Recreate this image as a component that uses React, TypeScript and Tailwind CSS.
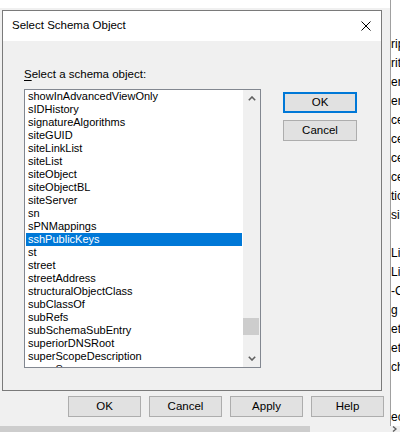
import { ReactNode } from "react"

const items = [
  "showInAdvancedViewOnly",
  "sIDHistory",
  "signatureAlgorithms",
  "siteGUID",
  "siteLinkList",
  "siteList",
  "siteObject",
  "siteObjectBL",
  "siteServer",
  "sn",
  "sPNMappings",
  "sshPublicKeys",
  "st",
  "street",
  "streetAddress",
  "structuralObjectClass",
  "subClassOf",
  "subRefs",
  "subSchemaSubEntry",
  "superiorDNSRoot",
  "superScopeDescription",
  "superScopes",
]

const fragments = [
  "rip", "rit", "er", "ers", "ce", "ce", "ce", "ce", "tic", "sin", "",
  "Lin", "Lin", "-C", "g", "et", "et", "ch",
]

function Button({ children, primary }: { children: ReactNode; primary?: boolean }) {
  return (
    <div
      className={
        primary
          ? "flex h-[21px] w-[74px] items-center justify-center border-2 border-[#0078d7] bg-[#e1e1e1] text-black"
          : "flex h-[21px] w-[74px] items-center justify-center border border-[#adadad] bg-[#e1e1e1] text-black"
      }
    >
      {children}
    </div>
  )
}

function Chevron({ down }: { down?: boolean }) {
  return (
    <svg width="8" height="5" viewBox="0 0 8 5" className="text-[#606060]">
      <polyline
        points={down ? "0.8,0.8 4,4 7.2,0.8" : "0.8,4.2 4,1 7.2,4.2"}
        fill="none"
        stroke="currentColor"
        strokeWidth="1.6"
      />
    </svg>
  )
}

function SchemaList() {
  return (
    <div className="mt-[7px] flex h-[279px] w-[237px] overflow-hidden border border-[#828790] bg-white">
      <div className="flex flex-1 flex-col overflow-hidden px-[1px] text-[11px] leading-[13px]">
        {items.map((item) => (
          <div
            key={item}
            className={
              item === "sshPublicKeys"
                ? "h-[13px] shrink-0 bg-[#0078d7] pl-[2px] text-white"
                : "h-[13px] shrink-0 pl-[2px] text-black"
            }
          >
            {item}
          </div>
        ))}
      </div>
      <div className="flex w-[17px] flex-col bg-[#f0f0f0]">
        <div className="flex h-[17px] items-center justify-center">
          <Chevron />
        </div>
        <div className="flex flex-1 flex-col">
          <div className="h-[211px]" />
          <div className="mr-[1px] h-[17px] bg-[#cdcdcd]" />
        </div>
        <div className="flex h-[17px] items-center justify-center">
          <Chevron down />
        </div>
      </div>
    </div>
  )
}

function SelectSchemaDialog() {
  return (
    <div className="absolute left-[2px] top-[10px] flex h-[381px] w-[380px] flex-col border border-[#7a7a7a] bg-[#f0f0f0]">
      <div className="flex h-[30px] items-center justify-between bg-white pl-[9px] pr-[10px]">
        <span>Select Schema Object</span>
        <svg width="10" height="10" viewBox="0 0 10 10">
          <path d="M0.5 0.5 L9.5 9.5 M9.5 0.5 L0.5 9.5" stroke="#000" strokeWidth="1" />
        </svg>
      </div>
      <div className="flex flex-1 pl-[21px] pt-[26px]">
        <div className="flex flex-col">
          <div className="h-[15px] leading-[15px]">
            <span className="underline underline-offset-2">S</span>elect a schema object:
          </div>
          <SchemaList />
        </div>
        <div className="ml-[22px] mt-[25px] flex flex-col gap-[7px]">
          <Button primary>OK</Button>
          <Button>Cancel</Button>
        </div>
      </div>
    </div>
  )
}

export default function App() {
  return (
    <div className="relative flex h-[432px] w-[400px] flex-col overflow-hidden bg-[#f0f0f0] font-['Liberation_Sans',Arial,sans-serif] text-[11.5px] text-black">
      <div className="flex flex-1">
        <div className="flex flex-1 flex-col">
          <div className="h-[8px] bg-white" />
          <div className="flex-1" />
          <div className="flex gap-[8px] pb-[9px] pl-[68px]">
            {["OK", "Cancel", "Apply", "Help"].map((label) => (
              <div
                key={label}
                className="flex h-[21px] w-[73px] items-center justify-center border border-[#adadad] bg-[#e1e1e1]"
              >
                {label}
              </div>
            ))}
          </div>
        </div>
        <div className="flex w-[10px] flex-col overflow-hidden border-l border-[#a0a0a0] bg-white pt-[35px] text-[12px]">
          {fragments.map((f, i) => (
            <div key={i} className="h-[19px] shrink-0 whitespace-nowrap leading-[19px]">
              {f}
            </div>
          ))}
          <div className="mt-[33px] h-[14px] whitespace-nowrap leading-[14px]">ec</div>
        </div>
      </div>
      <div className="flex h-[6px]">
        <div className="w-[310px] bg-[#cdcdcd]" />
        <div className="flex-1" />
        <div className="flex w-[8px] items-start">
          <svg width="5" height="6" viewBox="0 0 5 6">
            <polyline points="1,0.5 4,3 1,5.5" fill="none" stroke="#606060" strokeWidth="1.4" />
          </svg>
        </div>
      </div>
      <SelectSchemaDialog />
    </div>
  )
}
